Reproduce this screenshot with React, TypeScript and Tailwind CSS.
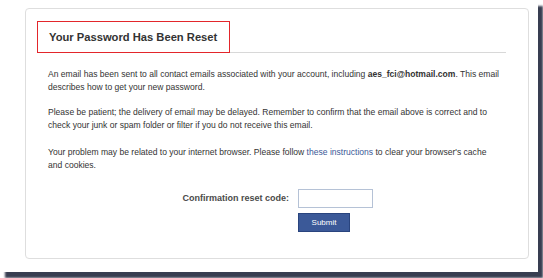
import React from "react";

export default function App() {
  return (
    <div className="w-[543px] h-[278px] bg-white overflow-hidden" style={{ fontFamily: '"Liberation Sans", Arial, sans-serif' }}>
      <div className="w-[538px] h-[272px] bg-white shadow-[5px_6px_2px_rgba(45,52,72,0.95)] pt-[8px] pl-[25px]">
        <div className="relative w-[504px] h-[251px] border border-[#dedede] rounded-[4px] px-[22px] text-[#333333]">
          <div className="h-[44px] border-b border-[#d8d8d8] flex items-end pb-[9px] pl-[1px]">
            <h2 className="text-[11.2px] font-bold leading-none text-[#333333]">Your Password Has Been Reset</h2>
          </div>
          <div className="absolute left-[11px] top-[12px] w-[193px] h-[32px] border border-[#e3262b]"></div>
          <div className="pt-[15px] pr-[5px] text-[8.55px] leading-[13px] text-[#333333]">
            <p>
              An email has been sent to all contact emails associated with your account, including{" "}
              <b>aes_fci@hotmail.com</b>. This email describes how to get your new password.
            </p>
            <p className="mt-[12px]">
              Please be patient; the delivery of email may be delayed. Remember to confirm that the email above is correct and to check your junk or spam folder or filter if you do not receive this email.
            </p>
            <p className="mt-[14px]">
              Your problem may be related to your internet browser. Please follow{" "}
              <span className="text-[#3b5998]">these instructions</span> to clear your browser's cache and cookies.
            </p>
          </div>
          <div className="mt-[17px] flex items-center">
            <div className="w-[250px] text-right pr-[9px] font-bold text-[9px] text-[#4a4a4a]">Confirmation reset code:</div>
            <div className="w-[75px] h-[19px] border border-[#b5c2d6] bg-white"></div>
          </div>
          <div className="mt-[5px] pl-[250px]">
            <div className="w-[52px] h-[19px] bg-[#3b5998] border border-[#29447e] flex items-center justify-center text-white text-[8px]">Submit</div>
          </div>
        </div>
      </div>
    </div>
  );
}
